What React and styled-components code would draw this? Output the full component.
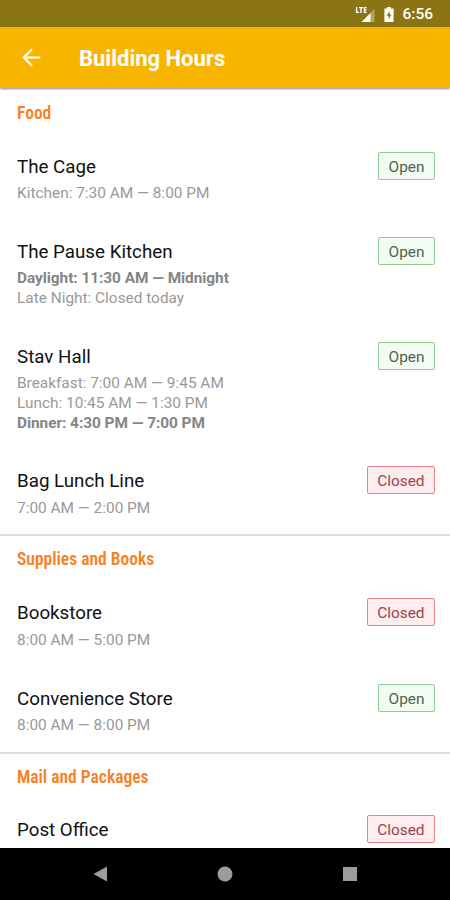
import React from 'react'
import styled, { createGlobalStyle } from 'styled-components'

const sections = [
    {
        title: 'Food',
        places: [
            { name: 'The Cage', open: true, hours: [{ text: 'Kitchen: 7:30 AM — 8:00 PM' }] },
            {
                name: 'The Pause Kitchen',
                open: true,
                hours: [
                    { text: 'Daylight: 11:30 AM — Midnight', current: true },
                    { text: 'Late Night: Closed today' }
                ]
            },
            {
                name: 'Stav Hall',
                open: true,
                hours: [
                    { text: 'Breakfast: 7:00 AM — 9:45 AM' },
                    { text: 'Lunch: 10:45 AM — 1:30 PM' },
                    { text: 'Dinner: 4:30 PM — 7:00 PM', current: true }
                ]
            },
            { name: 'Bag Lunch Line', open: false, hours: [{ text: '7:00 AM — 2:00 PM' }] }
        ]
    },
    {
        title: 'Supplies and Books',
        places: [
            { name: 'Bookstore', open: false, hours: [{ text: '8:00 AM — 5:00 PM' }] },
            { name: 'Convenience Store', open: true, hours: [{ text: '8:00 AM — 8:00 PM' }] }
        ]
    },
    {
        title: 'Mail and Packages',
        places: [
            { name: 'Post Office', open: false, hours: [] }
        ]
    }
]

const App = () => {
    return (
        <>
            <GlobalStyle />
            <Screen>
                <StatusBar>
                    <svg width="20" height="17" viewBox="0 0 20 17">
                        <path d="M19.5 3V16H6.5Z" fill="#fff" opacity="0.35" />
                        <path d="M15.5 7V16H6.5Z" fill="#fff" />
                        <path d="M1.6 1V6.4H4.2M4 1.6H8M6 1.6V7M11.6 1.6H9.4V6.4H11.6M9.4 4H11.4" fill="none" stroke="#fff" strokeWidth="1.4" />
                    </svg>
                    <svg width="10" height="17" viewBox="0 0 10 17">
                        <path d="M3 1H7V2.5H9.6V16H.4V2.5H3Z" fill="#fff" />
                        <path d="M5.7 5L2.6 9.8H4.6V13.6L7.5 8.6H5.7Z" fill="#8a7318" />
                    </svg>
                    <Clock>6:56</Clock>
                </StatusBar>
                <Header>
                    <BackButton aria-label="Back">
                        <svg width="20" height="20" viewBox="0 0 20 20" fill="none" stroke="#fff" strokeWidth="2.2">
                            <path d="M18.3 9.5H2M10 1.3L1.8 9.5L10 17.7" />
                        </svg>
                    </BackButton>
                    <Title>Building Hours</Title>
                </Header>
                <List>
                    {sections.map(section => (
                        <Section key={section.title}>
                            <SectionTitle>{section.title}</SectionTitle>
                            {section.places.map(place => (
                                <Row key={place.name}>
                                    <Info>
                                        <Name>{place.name}</Name>
                                        {place.hours.map(line => (
                                            <Hours key={line.text} $current={line.current}>{line.text}</Hours>
                                        ))}
                                    </Info>
                                    <Badge $open={place.open}>{place.open ? 'Open' : 'Closed'}</Badge>
                                </Row>
                            ))}
                        </Section>
                    ))}
                </List>
                <NavBar>
                    <svg width="14" height="16" viewBox="0 0 14 16"><path d="M14 .5V15.5L.5 8Z" fill="#9c9c9c" /></svg>
                    <svg width="16" height="16" viewBox="0 0 16 16"><circle cx="8" cy="8" r="7.5" fill="#9c9c9c" /></svg>
                    <svg width="14" height="14" viewBox="0 0 14 14"><rect width="14" height="14" fill="#9c9c9c" /></svg>
                </NavBar>
            </Screen>
        </>
    )
}

const GlobalStyle = createGlobalStyle`
    * {
        box-sizing: border-box;
        margin: 0;
        padding: 0;
    }

    body {
        background: #fff;
        font-family: Roboto, 'Liberation Sans', sans-serif;
    }
`;

const Screen = styled.div`
    width: 450px;
    height: 900px;
    display: flex;
    flex-direction: column;
    overflow: hidden;
    background: #fff;
`;

const StatusBar = styled.div`
    flex: none;
    height: 27px;
    padding: 1px 17px 0 0;
    display: flex;
    align-items: center;
    justify-content: flex-end;
    background: #8a7413;

    svg + svg {
        margin-left: 9px;
    }
`;

const Clock = styled.span`
    margin-left: 8px;
    color: #fff;
    font-size: 15.5px;
    font-weight: 500;
`;

const Header = styled.header`
    flex: none;
    height: 61px;
    display: flex;
    align-items: center;
    padding: 1px 0 0 22px;
    background: #f8b500;
    box-shadow: 0 1px 2px rgba(0, 0, 0, 0.45);
    z-index: 1;
`;

const BackButton = styled.button`
    width: 57px;
    height: 20px;
    border: none;
    background: none;
    text-align: left;

    svg {
        display: block;
    }
`;

const Title = styled.h1`
    padding-top: 1px;
    color: #fff;
    font-size: 22px;
    line-height: 28px;
    font-weight: 700;
    white-space: nowrap;
`;

const List = styled.main`
    flex: 1;
    min-height: 0;
    overflow: hidden;
`;

const Section = styled.section`
    & + & {
        border-top: 2px solid #dcdcdc;
    }

    & + & > h2 {
        height: 45.9px;
        padding-top: 13px;
    }
`;

const SectionTitle = styled.h2`
    height: 47.5px;
    padding: 15px 17px 0;
    color: #f98124;
    font-family: 'Roboto Condensed', Roboto, sans-serif;
    font-stretch: 75%;
    font-size: 17.5px;
    line-height: 21px;
    font-weight: 600;
`;

const Row = styled.div`
    display: flex;
    justify-content: space-between;
    align-items: flex-start;
    padding: 16px 15px 17.2px 17px;

    &:last-child {
        padding-bottom: 15.9px;
    }
`;

const Info = styled.div`
    padding-top: 4px;
`;

const Name = styled.h3`
    margin-bottom: 6.4px;
    color: #111;
    font-size: 18.75px;
    line-height: 22px;
    font-weight: 400;
`;

const Hours = styled.p`
    color: ${({ $current }) => ($current ? '#858585' : '#999')};
    font-size: 15.4px;
    line-height: 19.7px;
    font-weight: ${({ $current }) => ($current ? 700 : 400)};
    letter-spacing: ${({ $current }) => ($current ? '-0.04px' : '0')};
`;

const Badge = styled.span`
    height: 28px;
    padding: 0 9.5px;
    border: 1px solid ${({ $open }) => ($open ? '#8fcb91' : '#e8808a')};
    border-radius: 2px;
    background: ${({ $open }) => ($open ? '#f3fcf3' : '#ffeef0')};
    color: ${({ $open }) => ($open ? '#4a6649' : '#9a4248')};
    font-size: 15.4px;
    line-height: 28px;
`;

const NavBar = styled.nav`
    flex: none;
    height: 52px;
    padding: 0 93px;
    display: flex;
    align-items: center;
    justify-content: space-between;
    background: #000;
`;

export default App
